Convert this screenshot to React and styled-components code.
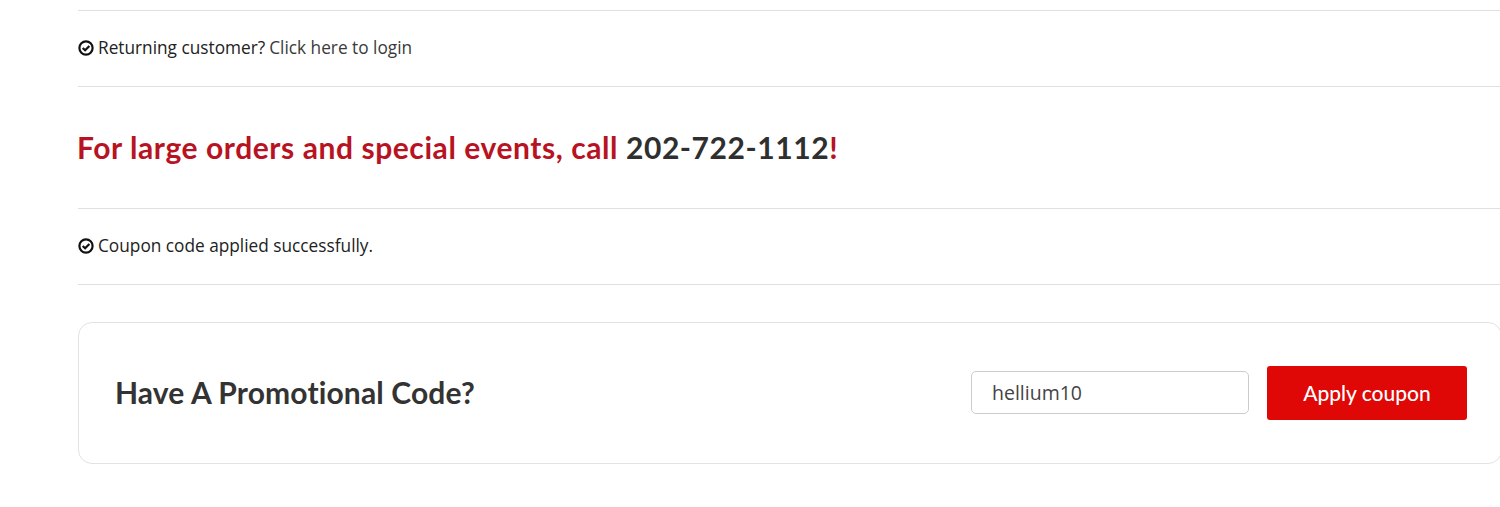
import React from "react";
import styled, { createGlobalStyle } from "styled-components";

const Global = createGlobalStyle`
  html, body { margin: 0; padding: 0; background: #fff; overflow: hidden; }
  body { font-family: "Open Sans", sans-serif; color: #222; }
`;

const Page = styled.div`
  width: 1424px;
  margin-left: 78px;
  padding-top: 10px;
`;

const Notice = styled.div`
  display: flex;
  align-items: center;
  gap: 4px;
  height: 73px;
  padding-bottom: 2px;
  border-top: 1px solid #e0e0e0;
  border-bottom: ${(p) => (p.$closed ? "1px solid #e0e0e0" : "none")};
  font-size: 17.25px;
  color: #222;
`;

const NoticeLink = styled.a`
  color: #3a3a3a;
  margin-left: 4px;
`;

const Callout = styled.h2`
  margin: 0;
  height: 122px;
  padding-top: 42px;
  box-sizing: border-box;
  border-top: 1px solid #e0e0e0;
  font-family: "Lato", sans-serif;
  font-size: 30px;
  line-height: 36px;
  font-weight: 700;
  letter-spacing: 0.57px;
  text-indent: -1px;
  font-variant-ligatures: none;
  color: #b81322;
`;

const Phone = styled.span`
  color: #2f2f2f;
  font-weight: 700;
`;

const CouponCard = styled.div`
  margin-top: 37px;
  height: 142px;
  box-sizing: border-box;
  display: flex;
  align-items: center;
  justify-content: space-between;
  padding: 0 34px 0 36px;
  border: 1px solid #e2e2e2;
  border-radius: 14px;
`;

const CardTitle = styled.h3`
  margin: 0 0 2px;
  font-family: "Lato", sans-serif;
  font-size: 30px;
  font-weight: 700;
  letter-spacing: 0.14px;
  font-variant-ligatures: none;
  color: #333;
`;

const CouponForm = styled.div`
  display: flex;
  align-items: center;
  gap: 18px;
`;

const CouponInput = styled.input`
  width: 278px;
  height: 43px;
  margin-bottom: 1px;
  box-sizing: border-box;
  padding: 0 20px;
  border: 1px solid #ccc;
  border-radius: 5px;
  font-family: "Open Sans", sans-serif;
  font-size: 19.5px;
  color: #444;
  outline: none;
`;

const ApplyButton = styled.button`
  width: 200px;
  height: 54px;
  padding: 0 0 2px;
  border: none;
  border-radius: 3px;
  background: #e00707;
  color: #fff;
  font-family: "Lato", sans-serif;
  font-size: 21px;
  font-weight: 500;
`;

const CheckIcon = () => (
  <svg width="16" height="16" viewBox="0 0 16 16" fill="none" aria-hidden="true">
    <circle cx="8" cy="8" r="6.6" stroke="#111" strokeWidth="2.2" />
    <path d="M4.7 8 7.1 10.3 11.4 5.9" stroke="#111" strokeWidth="2.2" />
  </svg>
);

export default function App() {
  return (
    <>
      <Global />
      <Page>
        <Notice>
          <CheckIcon />
          <span>
            Returning customer?
            <NoticeLink>Click here to login</NoticeLink>
          </span>
        </Notice>
        <Callout>
          For large orders and special events, call <Phone>202-722-1112</Phone>!
        </Callout>
        <Notice $closed>
          <CheckIcon />
          <span>Coupon code applied successfully.</span>
        </Notice>
        <CouponCard>
          <CardTitle>Have A Promotional Code?</CardTitle>
          <CouponForm>
            <CouponInput defaultValue="hellium10" />
            <ApplyButton>Apply coupon</ApplyButton>
          </CouponForm>
        </CouponCard>
      </Page>
    </>
  );
}
